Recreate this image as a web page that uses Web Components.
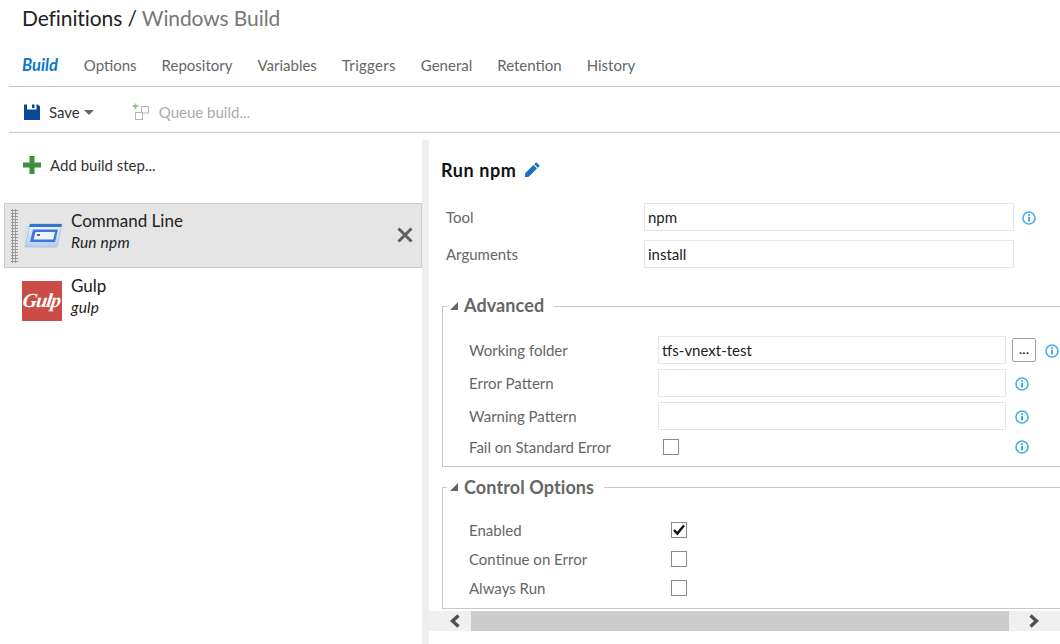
<!DOCTYPE html>
<html>
<head>
<meta charset="utf-8">
<title>Windows Build</title>
<style>
  html, body { margin: 0; height: 100%; overflow: hidden; background: #fff; }
  body { font-family: Lato, "Noto Sans", sans-serif; color: #222; }
</style>
</head>
<body>
<build-page></build-page>

<script>
const INFO = `<svg width="14" height="14" viewBox="0 0 14 14"><circle cx="7" cy="7" r="6" fill="#fff" stroke="#3fb0ee" stroke-width="1.6"/><rect x="6.2" y="3.2" width="1.6" height="1.6" fill="#2c8fd0"/><rect x="6.2" y="5.8" width="1.6" height="4.6" fill="#2c8fd0"/></svg>`;

class InfoIcon extends HTMLElement {
  constructor() {
    super();
    this.attachShadow({ mode: 'open' }).innerHTML = `
      <style>:host{display:inline-flex;width:14px;height:14px}</style>${INFO}`;
  }
}

class TabBar extends HTMLElement {
  constructor() {
    super();
    const tabs = ['Options', 'Repository', 'Variables', 'Triggers', 'General', 'Retention', 'History'];
    this.attachShadow({ mode: 'open' }).innerHTML = `
      <style>
        :host{display:flex;align-items:center;gap:25px;height:24px;padding-bottom:9px;margin-left:9px;padding-left:13px;border-bottom:1px solid #c8c8c8;font-size:15px;color:#666}
        .on{color:#0a78c8;font-weight:700;font-style:italic;font-size:16.5px;margin-right:1px}
        .t3{letter-spacing:.3px}
      </style>
      <span class="on">Build</span>
      ${tabs.map((t, i) => `<span class="t${i}">${t}</span>`).join('')}`;
  }
}

class ToolBar extends HTMLElement {
  constructor() {
    super();
    this.attachShadow({ mode: 'open' }).innerHTML = `
      <style>
        :host{display:flex;align-items:center;padding-top:5px;height:40px;margin-left:9px;padding-left:15px;border-bottom:1px solid #c8c8c8;font-size:15px;color:#333}
        .save{margin-left:9px}
        .caret{width:0;height:0;border:5px solid transparent;border-top:5px solid #666;border-bottom:0;margin-left:4px}
        .queue{margin-left:38px;display:flex;align-items:center;gap:8px;color:#aaa}
      </style>
      <svg width="16" height="16" viewBox="0 0 16 16"><path d="M0 .5h3v5h9.5v-5H14l2 2V16H0z" fill="#0b4a92"/><rect x="8" y="0.5" width="2.5" height="3.5" fill="#0b4a92"/></svg>
      <span class="save">Save</span><span class="caret"></span>
      <span class="queue">
        <svg width="19" height="18" viewBox="0 0 19 18" fill="#fff" stroke="#b5b5b5"><path d="M3.5 0.5v5.5M.7 3.2h5.6" stroke="#8fc08f" stroke-width="1.7" fill="none"/><rect x="9.5" y="3.5" width="7" height="6.5"/><rect x="3.5" y="9.5" width="7" height="7"/></svg>
        <span>Queue build...</span>
      </span>`;
  }
}

class StepItem extends HTMLElement {
  constructor() {
    super();
    this.attachShadow({ mode: 'open' }).innerHTML = `
      <style>
        :host{display:flex;align-items:center;height:63px;margin-left:4px;border:1px solid transparent;position:relative;font-size:17px;color:#222}
        :host([selected]){background:#e5e5e5;border-color:#ccc}
        .grip{width:7px;height:54px;margin-left:6px;background-image:radial-gradient(#9a9a9a 1px,transparent 1.2px);background-size:3px 3px;visibility:hidden}
        :host([selected]) .grip{visibility:visible}
        .icon{width:40px;height:40px;margin-left:4px;display:flex;align-items:center}
        .txt{margin-left:9px;margin-bottom:9px;display:flex;flex-direction:column;line-height:21px}
        i{font-size:15.5px;letter-spacing:.2px;position:relative;top:1px}
        .x{position:absolute;right:7px;top:22px;display:none}
        :host([selected]) .x{display:block}
      </style>
      <div class="grip"></div>
      <div class="icon"><slot name="icon"></slot></div>
      <div class="txt"><span>${this.getAttribute('name')}</span><i>${this.getAttribute('sub')}</i></div>
      <svg class="x" width="18" height="18" viewBox="0 0 18 18"><path d="M2.5 2.5l13 13M15.5 2.5l-13 13" stroke="#5f5f5f" stroke-width="3"/></svg>`;
  }
}

class StepList extends HTMLElement {
  constructor() {
    super();
    this.attachShadow({ mode: 'open' }).innerHTML = `
      <style>
        :host{display:block;width:422px;flex:none}
        .add{display:flex;align-items:center;gap:9px;height:50px;margin-bottom:13px;padding-left:23px;font-size:15px;color:#333}
        .gulp{width:40px;height:40px;background:#cb4c46;color:#fff;display:flex;align-items:center;justify-content:center;font:italic 700 20px "Liberation Serif",serif;letter-spacing:-1px}
        .gulp span{display:block;transform:skewX(-8deg)}
      </style>
      <div class="add">
        <svg width="18" height="18" viewBox="0 0 18 18"><path d="M6.5 0h5v6.5H18v5h-6.5V18h-5v-6.5H0v-5h6.5z" fill="#3f8f3f"/></svg>
        <span>Add build step...</span>
      </div>
      <step-item selected name="Command Line" sub="Run npm">
        <svg slot="icon" width="40" height="26" viewBox="0 0 40 26">
          <defs>
            <linearGradient id="g" x1="0" y1="0" x2="0" y2="1"><stop offset="0" stop-color="#eef3fb"/><stop offset="1" stop-color="#b7cdee"/></linearGradient>
            <linearGradient id="t" x1="0" y1="0" x2="1" y2="0"><stop offset="0" stop-color="#e5e5e5"/><stop offset="1" stop-color="#cfdcf2"/></linearGradient>
          </defs>
          <path d="M0 3h8L3 23H0z" fill="url(#t)"/>
          <path d="M8 1H40L35 24H3z" fill="url(#g)" stroke="#9fb4d6" stroke-width=".6"/>
          <path d="M8 1H40L39.3 4H7.2z" fill="#3474c8"/>
          <path d="M11 6.5H36L33 19H8z" fill="#3a78db"/>
          <path d="M13.5 9H33L31.2 16.5H11.7z" fill="#eef4fc"/>
          <rect x="15" y="11" width="3" height="2" fill="#666"/>
        </svg>
      </step-item>
      <step-item name="Gulp" sub="gulp"><div slot="icon" class="gulp"><span>Gulp</span></div></step-item>`;
  }
}

class FieldRow extends HTMLElement {
  constructor() {
    super();
    const value = this.getAttribute('value') || '';
    this.attachShadow({ mode: 'open' }).innerHTML = `
      <style>
        :host{display:flex;align-items:center;font-size:15px;color:#666;height:var(--row-h,28px)}
        label{width:var(--label-w,198px);flex:none}
        .box{width:var(--box-w,370px);height:100%;box-sizing:border-box;border:1px solid #e6e6e6;padding-left:3px;display:flex;align-items:center;color:#222;flex:none;white-space:nowrap}
        .end{display:flex;align-items:center}
      </style>
      <label>${this.getAttribute('label')}</label>
      <div class="box">${value}</div>
      <div class="end"><slot></slot></div>`;
  }
}

class CheckRow extends HTMLElement {
  constructor() {
    super();
    const on = this.hasAttribute('checked');
    this.attachShadow({ mode: 'open' }).innerHTML = `
      <style>
        :host{display:flex;align-items:center;font-size:15px;color:#666;height:29px}
        label{width:var(--label-w,202px);flex:none}
        .c{width:16px;height:16px;box-sizing:border-box;border:1px solid #8a8a8a;flex:none;display:flex}
      </style>
      <label>${this.getAttribute('label')}</label>
      <span class="c">${on ? '<svg width="14" height="14" viewBox="0 0 14 14"><path d="M2 7l3.3 3.6L12 2.6" fill="none" stroke="#111" stroke-width="2.4"/></svg>' : ''}</span>
      <slot></slot>`;
  }
}

class GroupBox extends HTMLElement {
  constructor() {
    super();
    this.attachShadow({ mode: 'open' }).innerHTML = `
      <style>
        :host{display:block;margin-left:13px}
        fieldset{margin:0 -20px 0 0;padding:var(--pad-top,16px) 0 0 26px;border:1px solid #c8c8c8;min-width:0;height:var(--box-h,auto);box-sizing:border-box}
        legend{display:flex;align-items:center;gap:6px;padding:0 10px 0 3px;margin-left:-22px;font-size:18px;font-weight:700;color:#666;line-height:22px;letter-spacing:.1px}
        .tri{width:0;height:0;border-left:8px solid transparent;border-bottom:8px solid #666}
        .name{position:relative;top:var(--legend-top,0)}
      </style>
      <fieldset>
        <legend><span class="tri"></span><span class="name">${this.getAttribute('title')}</span></legend>
        <slot></slot>
      </fieldset>`;
  }
}

class HScroll extends HTMLElement {
  constructor() {
    super();
    this.attachShadow({ mode: 'open' }).innerHTML = `
      <style>
        :host{display:flex;align-items:center;height:20px;background:#f0f0f0}
        svg{flex:none}
        .thumb{width:538px;height:100%;background:#cdcdcd;flex:none;margin-left:11px}
        .r{margin-left:20px}
        .l{margin-left:20px}
      </style>
      <svg class="l" width="11" height="14" viewBox="0 0 11 14"><path d="M9.5 1.5L3.5 7 9.5 12.5" fill="none" stroke="#505050" stroke-width="3.4"/></svg>
      <div class="thumb"></div>
      <svg class="r" width="11" height="14" viewBox="0 0 11 14"><path d="M1.5 1.5L7.5 7 1.5 12.5" fill="none" stroke="#505050" stroke-width="3.4"/></svg>`;
  }
}

class TaskPane extends HTMLElement {
  constructor() {
    super();
    this.attachShadow({ mode: 'open' }).innerHTML = `
      <style>
        :host{display:block;flex:1;min-width:0;overflow:hidden;border-left:7px solid #eee;box-sizing:border-box}
        h2{display:flex;align-items:center;gap:6px;margin:0;height:59px;padding-left:12px;font-size:18px;font-weight:700;color:#111;letter-spacing:.6px}
        .top{padding-left:17px;padding-top:4px;display:flex;flex-direction:column;gap:9px;margin-bottom:27px}
        .top info-icon{margin-left:8px;margin-top:2px}
        .rows{display:flex;flex-direction:column;--label-w:189px;--box-w:348px;--row-h:28px;gap:5px}
        .rows info-icon{margin-left:9px;margin-top:2px}
        .adv{--pad-top:19px;--box-h:172px;--legend-top:-1px;margin-bottom:9px}
        .browse{width:24px;height:24px;box-sizing:border-box;margin-left:6px;border:1px solid #a0a0a0;border-radius:2px;background:#fff;font-size:14px;color:#111;display:flex;align-items:center;justify-content:center;padding-bottom:3px}
        .rows .browse + info-icon{margin-left:9px}
        .rows .check-end{margin-left:336px;margin-top:0}
        .fail{--label-w:194px;margin-top:-3px}
        .ctl{--pad-top:17px;--box-h:133px;--label-w:202px;margin-bottom:2px}
      </style>
      <h2><span>Run npm</span>
        <svg width="18" height="18" viewBox="0 0 18 18"><path d="M13.2 1.2l3.6 3.6-2 2-3.6-3.6z" fill="#1b6fc0"/><path d="M10.4 4l3.6 3.6-8.2 8.2L2 16.2l.2-4z" fill="#1b6fc0"/></svg>
      </h2>
      <div class="top">
        <field-row label="Tool" value="npm"><info-icon></info-icon></field-row>
        <field-row label="Arguments" value="install"></field-row>
      </div>
      <group-box class="adv" title="Advanced">
        <div class="rows">
          <field-row label="Working folder" value="tfs-vnext-test"><span class="browse">...</span><info-icon></info-icon></field-row>
          <field-row label="Error Pattern"><info-icon></info-icon></field-row>
          <field-row label="Warning Pattern"><info-icon></info-icon></field-row>
          <check-row class="fail" label="Fail on Standard Error"><info-icon class="check-end"></info-icon></check-row>
        </div>
      </group-box>
      <group-box class="ctl" title="Control Options">
        <check-row checked label="Enabled"></check-row>
        <check-row label="Continue on Error"></check-row>
        <check-row label="Always Run"></check-row>
      </group-box>
      <h-scroll></h-scroll>`;
  }
}

class BuildPage extends HTMLElement {
  constructor() {
    super();
    this.attachShadow({ mode: 'open' }).innerHTML = `
      <style>
        :host{display:block;width:1060px;height:644px;overflow:hidden}
        h1{margin:0;height:53px;padding:4px 0 0 22px;box-sizing:border-box;font-size:21px;font-weight:400;color:#222;line-height:28px;letter-spacing:-.1px}
        h1 span{color:#777}
        .main{display:flex;height:504px;margin-top:7px}
      </style>
      <h1>Definitions / <span>Windows Build</span></h1>
      <tab-bar></tab-bar>
      <tool-bar></tool-bar>
      <div class="main">
        <step-list></step-list>
        <task-pane></task-pane>
      </div>`;
  }
}

customElements.define('info-icon', InfoIcon);
customElements.define('tab-bar', TabBar);
customElements.define('tool-bar', ToolBar);
customElements.define('step-item', StepItem);
customElements.define('step-list', StepList);
customElements.define('field-row', FieldRow);
customElements.define('check-row', CheckRow);
customElements.define('group-box', GroupBox);
customElements.define('h-scroll', HScroll);
customElements.define('task-pane', TaskPane);
customElements.define('build-page', BuildPage);
</script>
</body>
</html>
